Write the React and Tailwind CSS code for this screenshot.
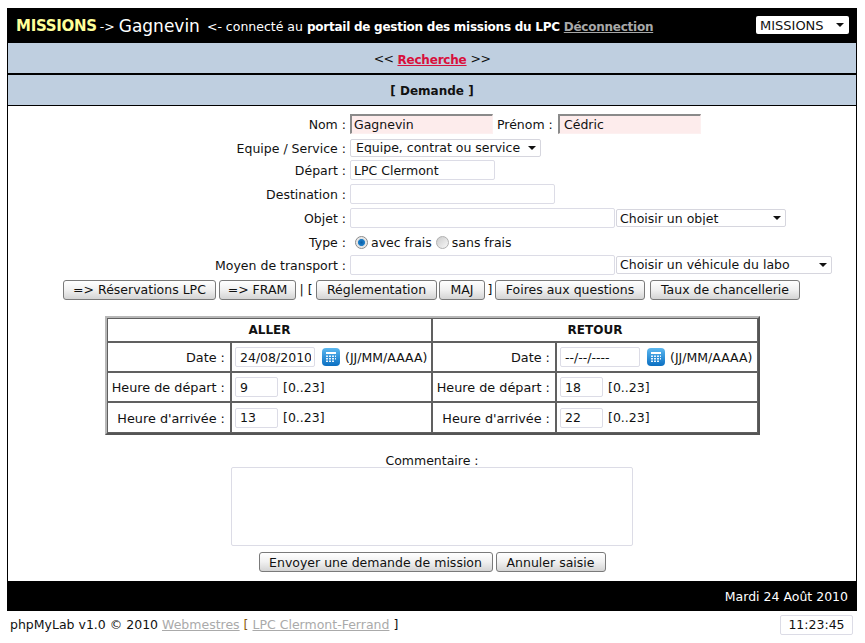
import React from "react";

const btn = "h-[20px] px-0 border border-[#7a7a7a] rounded-[3px] bg-gradient-to-b from-[#ffffff] via-[#f0f0f0] to-[#d4d4d4] text-[12.5px] leading-none text-[#111] whitespace-nowrap shrink-0";
const inp = "h-[20px] border border-[#dcdce6] rounded-[2px] bg-white px-[3px] text-[12.5px] text-[#111] outline-none shrink-0";
const pink = "h-[20px] border-t-2 border-l-2 border-t-[#8a8a8a] border-l-[#8a8a8a] border-r border-b border-r-[#fdf0f0] border-b-[#fdf0f0] bg-[#fdecec] text-[12.5px] text-[#111] outline-none shrink-0";
const th = "border border-[#606060] font-bold text-center text-[12px] text-[#111] p-0";
const lab = "border border-[#606060] text-right text-[12.8px] text-[#111] pr-[1px] pt-[2px] whitespace-nowrap";
const val = "border border-[#606060] text-left text-[12.5px] text-[#111] pl-[3px] whitespace-nowrap p-0";

function Sel({ width, label, extra = "pl-[3px]" }) {
  return (
    <span className="relative block shrink-0" style={{ width }}>
      <select defaultValue={label} className={`block w-full h-[18px] appearance-none border border-[#d6d6de] rounded-[2px] bg-white text-[12.5px] leading-none text-[#111] outline-none ${extra}`}>
        <option>{label}</option>
      </select>
      <svg className="absolute right-[5px] top-[7px]" width="8" height="4" viewBox="0 0 8 4"><path d="M0 0h8L4 4z" fill="#111" /></svg>
    </span>
  );
}

function Row({ label, children, h = "h-[20px]", mt = "mt-[4px]" }) {
  return (
    <div className={`flex items-center ${h} ${mt}`}>
      <label className="w-[341px] text-right text-[12.5px] text-[#111] pr-[3px] pt-[2px] shrink-0 whitespace-nowrap">{label}</label>
      <div className="flex items-center ml-[1px]">{children}</div>
    </div>
  );
}

function Cal() {
  return (
    <svg className="ml-[7px] mr-[5px] shrink-0" width="18" height="18" viewBox="0 0 18 18">
      <defs>
        <linearGradient id="calg" x1="0" y1="0" x2="0" y2="1">
          <stop offset="0" stopColor="#5cb8f0" />
          <stop offset="1" stopColor="#0a6fc2" />
        </linearGradient>
      </defs>
      <rect x="0" y="0" width="18" height="18" rx="4" fill="url(#calg)" />
      <rect x="4" y="4" width="10" height="2" fill="#ffffff" />
      <path d="M4 7.5h2v1.5H4zM7 7.5h2v1.5H7zM10 7.5h2v1.5h-2zM13 7.5h1v1.5h-1zM4 10h2v1.5H4zM7 10h2v1.5H7zM10 10h2v1.5h-2zM13 10h1v1.5h-1zM4 12.5h2V14H4zM7 12.5h2V14H7zM10 12.5h2V14h-2z" fill="#e8f4fd" />
    </svg>
  );
}

function DateCell({ value }) {
  return (
    <td className={val}>
      <div className="flex items-center">
        <input readOnly value={value} className={`${inp} w-[80px] pl-[4px]`} />
        <Cal />
        <span className="text-[12.5px] mt-[2px]">(JJ/MM/AAAA)</span>
      </div>
    </td>
  );
}

function HourCell({ value }) {
  return (
    <td className={val}>
      <div className="flex items-center">
        <input readOnly value={value} className={`${inp} w-[43px] pl-[4px]`} />
        <span className="ml-[5px] mt-[2px]">[0..23]</span>
      </div>
    </td>
  );
}

export default function App() {
  return (
    <div className="w-[865px] h-[643px] bg-white overflow-hidden pt-[8px] px-[7px]" style={{ fontFamily: '"DejaVu Sans", Verdana, sans-serif' }}>
      <div className="w-[850px] border-x border-black">
        <header className="h-[35px] -mx-px bg-black flex items-center pl-[9px] pr-[8px] text-white">
          <span className="font-bold text-[15px] text-[#ffff99] tracking-[-0.3px] mt-[2px]">MISSIONS</span>
          <span className="text-[12.5px] ml-[3px] mt-[3px]">-&gt;</span>
          <span className="text-[17px] ml-[4px] mt-[2px]">Gagnevin</span>
          <span className="text-[12.5px] ml-[7px] mt-[3px]">&lt;- connecté au</span>
          <span className="text-[12px] font-bold tracking-[-0.25px] ml-[4px] mt-[3px]">portail de gestion des missions du LPC</span>
          <a className="text-[12px] font-bold tracking-[-0.25px] ml-[4px] mt-[3px] underline text-[#a8a8a8]">Déconnection</a>
          <span className="relative ml-auto w-[93px] mb-[1px]">
            <select defaultValue="MISSIONS" className="w-full h-[18px] block appearance-none bg-white rounded-[2px] pl-[4px] text-[13px] leading-none text-[#111] outline-none">
              <option>MISSIONS</option>
            </select>
            <svg className="absolute right-[5px] top-[7px]" width="8" height="4" viewBox="0 0 8 4"><path d="M0 0h8L4 4z" fill="#111" /></svg>
          </span>
        </header>
        <div className="h-[32px] pt-[3px] bg-[#bfcfe0] border-b-2 border-black flex items-center justify-center text-[12.5px] text-[#111]">
          <span className="tracking-[-0.6px]">&lt;&lt;</span>&nbsp;<a className="font-bold text-[12px] tracking-[-0.2px] underline text-[#d8103c]">Recherche</a>&nbsp;<span className="tracking-[-0.6px]">&gt;&gt;</span>
        </div>
        <div className="h-[31px] pt-[2px] bg-[#bfcfe0] border-b border-black flex items-center justify-center text-[12px] font-bold text-[#111]">
          [ Demande ]
        </div>

        <main className="h-[475px] pt-[8px]">
          <div className="flex items-center h-[20px]">
            <label className="w-[341px] text-right text-[12.5px] text-[#111] pr-[3px] pt-[2px] shrink-0">Nom :</label>
            <div className="flex items-center ml-[1px]">
              <input readOnly value="Gagnevin" className={`${pink} w-[143px] px-[2px]`} />
              <span className="text-[12.5px] text-[#111] mx-[4px] pt-[2px] w-[57px] whitespace-nowrap">Prénom :</span>
              <input readOnly value="Cédric" className={`${pink} w-[143px] pl-[4px]`} />
            </div>
          </div>
          <Row label="Equipe / Service :" h="h-[18px]" mt="mt-[5px]">
            <Sel width={191} label="Equipe, contrat ou service" extra="pl-[5px]" />
          </Row>
          <Row label="Départ :" mt="mt-[3px]">
            <input readOnly value="LPC Clermont" className={`${inp} w-[145px]`} />
          </Row>
          <Row label="Destination :">
            <input readOnly className={`${inp} w-[205px]`} />
          </Row>
          <Row label="Objet :">
            <input readOnly className={`${inp} w-[265px]`} />
            <span className="ml-px"><Sel width={170} label="Choisir un objet" extra="pl-[3px] pt-[2px]" /></span>
          </Row>
          <Row label="Type :" h="h-[18px]" mt="mt-[5px]">
            <input type="radio" readOnly checked name="t" className="ml-[5px] w-[13px] h-[13px] appearance-none rounded-full border border-[#8a8a8a] bg-[radial-gradient(circle,#0a5fa8_0%,#1f7fc8_40%,#e0e0e0_50%,#ffffff_100%)]" />
            <span className="text-[12.5px] text-[#111] ml-[3px] mt-[2px]">avec frais</span>
            <input type="radio" readOnly name="t" className="ml-[4px] w-[13px] h-[13px] appearance-none rounded-full border border-[#b0b0b0] bg-gradient-to-br from-[#cccccc] to-[#f8f8f8]" />
            <span className="text-[12.5px] text-[#111] ml-[3px] mt-[2px]">sans frais</span>
          </Row>
          <Row label="Moyen de transport :" mt="mt-[4px]">
            <input readOnly className={`${inp} w-[265px]`} />
            <span className="ml-px"><Sel width={216} label="Choisir un véhicule du labo" /></span>
          </Row>
          <div className="flex items-center h-[20px] mt-[5px] pl-[55px] text-[12.5px] text-[#111]">
            <button className={`${btn} w-[153px]`}>=&gt; Réservations LPC</button>
            <button className={`${btn} w-[77px] ml-[3px]`}>=&gt; FRAM</button>
            <span className="w-[20px] text-center whitespace-nowrap">| [</span>
            <button className={`${btn} w-[121px]`}>Réglementation</button>
            <button className={`${btn} w-[46px] ml-[2px]`}>MAJ</button>
            <span className="w-[10px] text-center">]</span>
            <button className={`${btn} w-[150px]`}>Foires aux questions</button>
            <button className={`${btn} w-[150px] ml-[5px]`}>Taux de chancellerie</button>
          </div>

          <table className="mt-[16px] ml-[97px] w-[655px] table-fixed border-separate border-spacing-0 border-2 border-t-[#b8b8b8] border-l-[#b8b8b8] border-r-[#555] border-b-[#555]">
            <colgroup>
              <col className="w-[124px]" />
              <col className="w-[201px]" />
              <col className="w-[124px]" />
              <col className="w-[202px]" />
            </colgroup>
            <tbody>
              <tr className="h-[24px]">
                <th colSpan={2} className={th}>ALLER</th>
                <th colSpan={2} className={th}>RETOUR</th>
              </tr>
              <tr className="h-[30px]">
                <td className={lab}>Date :&nbsp;</td>
                <DateCell value="24/08/2010" />
                <td className={lab}>Date :&nbsp;</td>
                <DateCell value="--/--/----" />
              </tr>
              <tr className="h-[30px]">
                <td className={lab}>Heure de départ :&nbsp;</td>
                <HourCell value="9" />
                <td className={lab}>Heure de départ :&nbsp;</td>
                <HourCell value="18" />
              </tr>
              <tr className="h-[31px]">
                <td className={lab}>Heure d'arrivée :&nbsp;</td>
                <HourCell value="13" />
                <td className={lab}>Heure d'arrivée :&nbsp;</td>
                <HourCell value="22" />
              </tr>
            </tbody>
          </table>

          <div className="flex flex-col items-center">
            <div className="mt-[18px] h-[16px] leading-[16px] text-[12.5px] text-[#111]">Commentaire :</div>
            <textarea readOnly className="block mt-[-2px] w-[402px] h-[79px] border border-[#dcdce6] rounded-[2px] bg-white outline-none resize-none" />
            <div className="flex gap-[3px] mt-[6px]">
              <button className={`${btn} w-[234px] pt-[2px]`}>Envoyer une demande de mission</button>
              <button className={`${btn} w-[110px] pt-[2px]`}>Annuler saisie</button>
            </div>
          </div>
        </main>

        <div className="h-[30px] pt-[2px] -mx-px bg-black flex items-center justify-end pr-[9px] text-[12.5px] text-white">
          Mardi 24 Août 2010
        </div>
      </div>
      <footer className="flex items-center justify-between w-[850px] h-[24px] mt-[1px] pl-[3px] pr-[4px] text-[12.5px] text-[#111]">
        <div className="whitespace-nowrap mt-[3px]">
          phpMyLab v1.0 © 2010 <a className="underline text-[#aaa]">Webmestres</a> <span className="text-[#8a5a10]">[</span> <a className="underline text-[#aaa]">LPC Clermont-Ferrand</a> ]
        </div>
        <input readOnly value="11:23:45" className="w-[73px] h-[20px] border border-[#dcdce6] rounded-[2px] bg-white text-center text-[12.5px] text-[#111] outline-none mt-[1px]" />
      </footer>
    </div>
  );
}
